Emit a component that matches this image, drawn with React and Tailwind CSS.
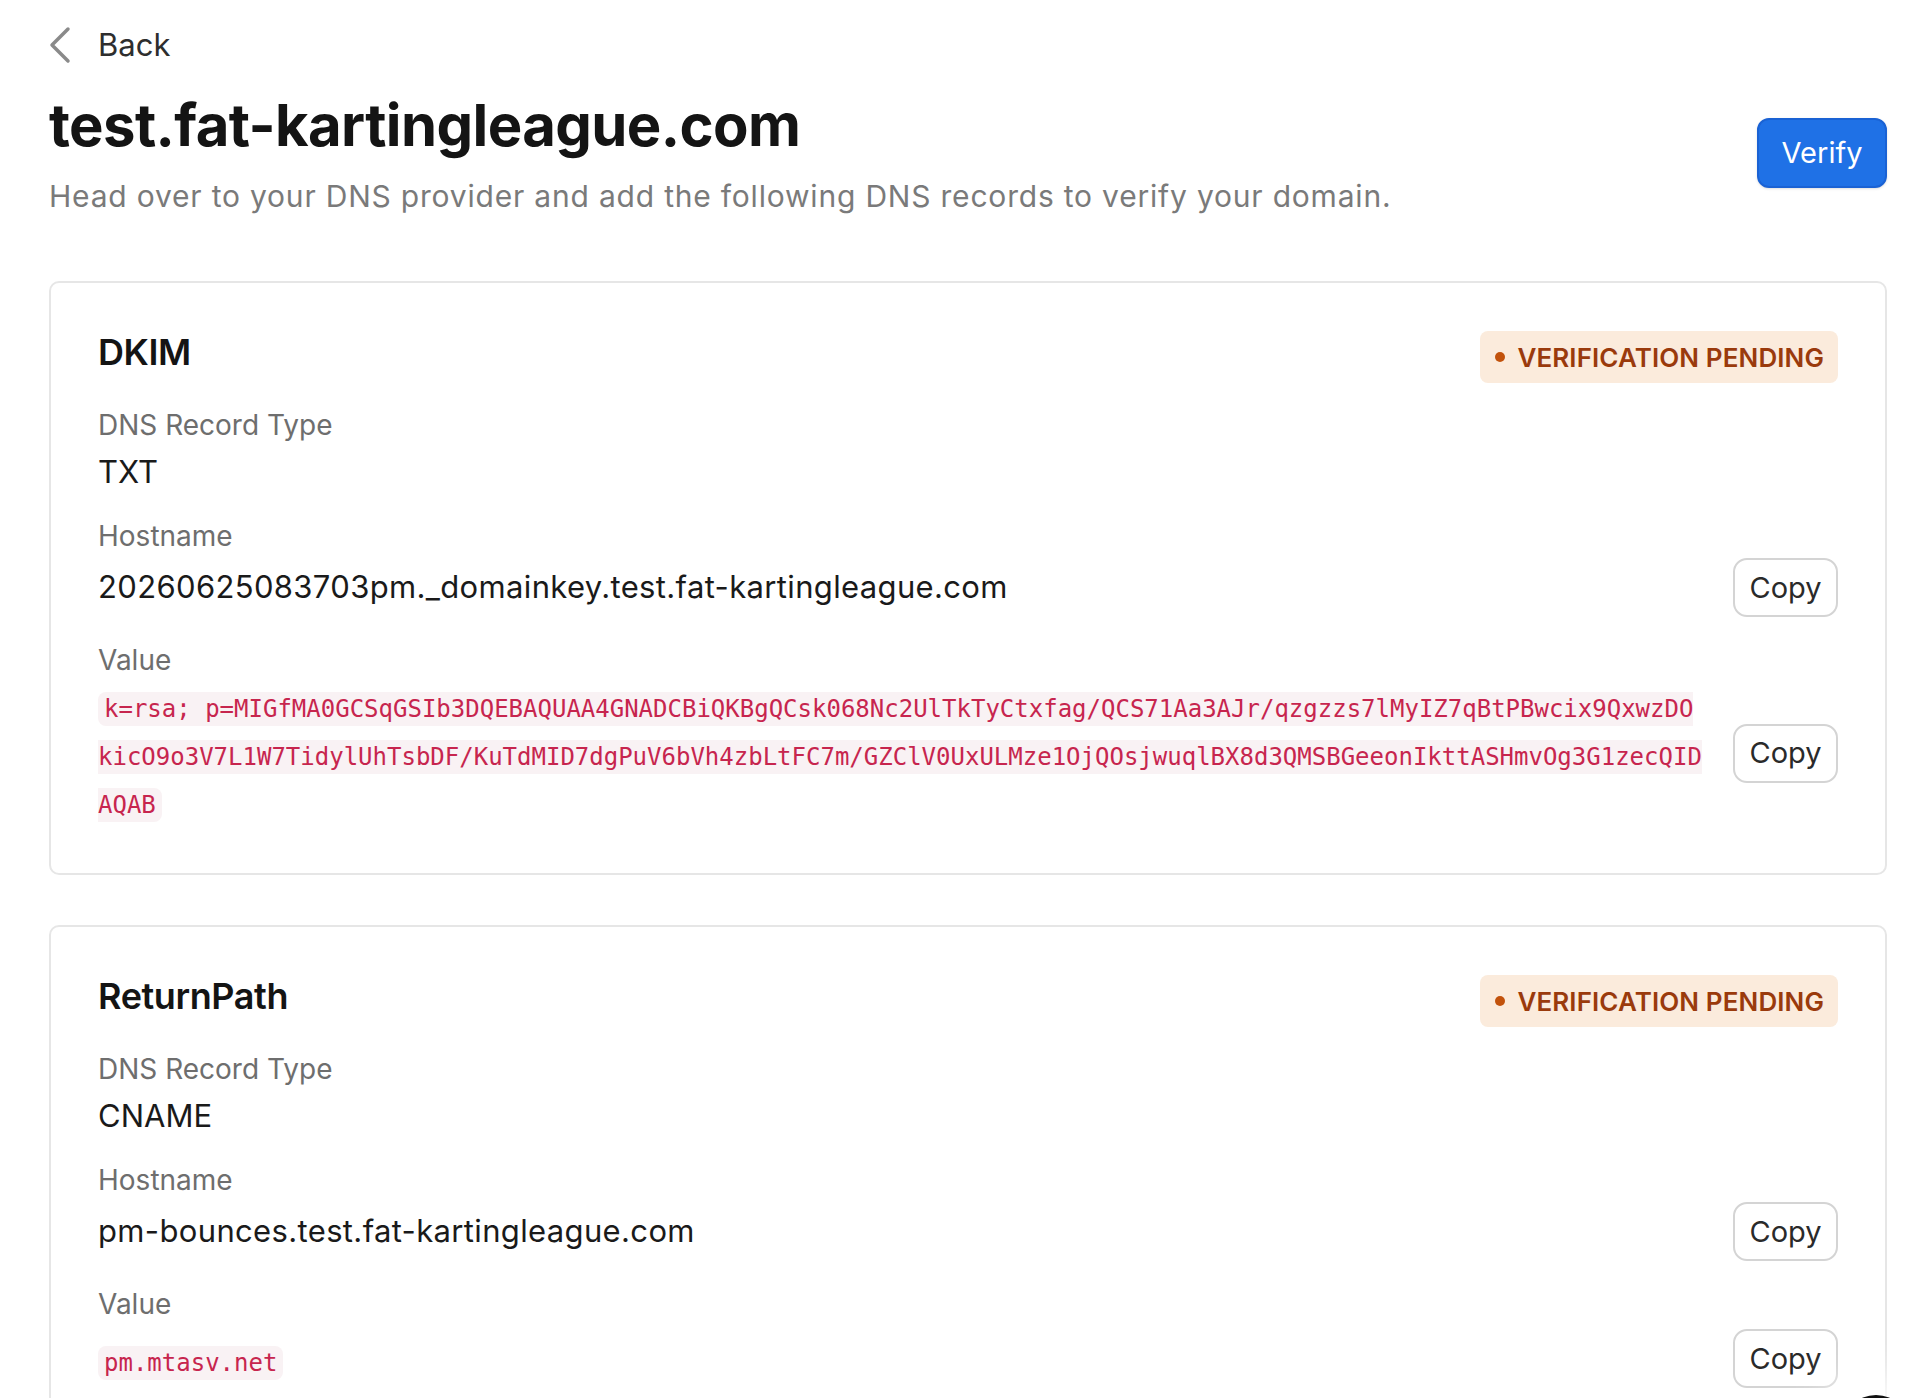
import React from 'react'

const dkimValue = [
  'k=rsa; p=MIGfMA0GCSqGSIb3DQEBAQUAA4GNADCBiQKBgQCsk068Nc2UlTkTyCtxfag/QCS71Aa3AJr/qzgzzs7lMyIZ7qBtPBwcix9QxwzDO',
  'kicO9o3V7L1W7TidylUhTsbDF/KuTdMID7dgPuV6bVh4zbLtFC7m/GZClV0UxULMze1OjQOsjwuqlBX8d3QMSBGeeonIkttASHmvOg3G1zecQID',
  'AQAB',
]

const records = [
  {
    name: 'DKIM',
    type: 'TXT',
    hostname: '20260625083703pm._domainkey.test.fat-kartingleague.com',
    value: dkimValue,
  },
  {
    name: 'ReturnPath',
    type: 'CNAME',
    hostname: 'pm-bounces.test.fat-kartingleague.com',
    value: ['pm.mtasv.net'],
  },
]

function CopyButton({ className = '' }) {
  return (
    <button className={`shrink-0 w-[105px] h-[59px] rounded-[14px] border-2 border-[#d4d4d4] bg-white text-[29px] text-[#2a2a2a] ${className}`}>
      Copy
    </button>
  )
}

function StatusBadge() {
  return (
    <div className="flex items-center gap-[12px] h-[52px] pl-[15px] pr-[14px] rounded-[8px] bg-[#fbebdc]">
      <span className="w-[10px] h-[10px] rounded-full bg-[#c2520c]" />
      <span className="text-[26px] font-semibold tracking-[0.1px] text-[#9a3a0c]">VERIFICATION PENDING</span>
    </div>
  )
}

function RecordCard({ record }) {
  return (
    <div className="border-2 border-[#e6e6e6] rounded-[10px] px-[47px] pt-[48px] pb-[44px]">
      <div className="flex items-center justify-between">
        <h2 className="text-[36px] font-semibold tracking-[-0.4px] text-[#141414] leading-[44px] -mt-[10px]">{record.name}</h2>
        <StatusBadge />
      </div>

      <div className="mt-[22px] text-[28px] leading-[40px] text-[#6e6e6e]">DNS Record Type</div>
      <div className="mt-[3px] text-[31px] leading-[48px] text-[#1a1a1a]">{record.type}</div>

      <div className="mt-[20px] text-[28px] leading-[40px] text-[#6e6e6e]">Hostname</div>
      <div className="mt-[2px] flex items-center gap-[30px]">
        <div className="flex-1 min-w-0 text-[31px] tracking-[0.35px] text-[#1a1a1a]">{record.hostname}</div>
        <CopyButton />
      </div>

      <div className="mt-[23px] text-[28px] leading-[40px] text-[#6e6e6e]">Value</div>
      <div className="mt-[5px] flex items-center gap-[30px]">
        <div className="flex-1 min-w-0 font-['DejaVu_Sans_Mono',monospace] text-[24px] leading-[48px] whitespace-nowrap">
          <code className="font-['DejaVu_Sans_Mono',monospace] text-[24px] leading-[48px] text-[#c7254e] bg-[#f9f2f4] px-[6px] py-[3px] rounded-[8px]">
            {record.value.map((line, i) => (
              <React.Fragment key={i}>
                {i > 0 && <br />}
                {line}
              </React.Fragment>
            ))}
          </code>
        </div>
        <CopyButton className="mb-[8px]" />
      </div>
    </div>
  )
}

export default function App() {
  return (
    <div className="relative h-screen overflow-hidden bg-white font-['Inter',sans-serif]">
      <div className="pl-[49px] pr-[37px] pt-[25px]">
        <div className="flex items-center gap-[26px] h-[40px]">
          <svg width="24" height="38" viewBox="0 0 24 38" fill="none" className="-ml-[1px]">
            <path d="M20 3 L4 19 L20 35" stroke="#8a8a8a" strokeWidth="3.5" strokeLinecap="round" strokeLinejoin="round" />
          </svg>
          <span className="text-[31px] text-[#2e2e2e]">Back</span>
        </div>

        <div className="mt-[24px] flex items-center justify-between">
          <div>
            <h1 className="text-[58px] font-bold leading-[72px] tracking-[-0.6px] text-[#141414]">
              test.fat-kartingleague.com
            </h1>
            <p className="mt-[15px] text-[30px] leading-[40px] tracking-[0.8px] text-[#7a7a7a]">
              Head over to your DNS provider and add the following DNS records to verify your domain.
            </p>
          </div>
          <button className="h-[70px] w-[130px] rounded-[12px] bg-[#1f71e6] border-2 border-[#1a62d4] text-white text-[29px] shadow-sm">
            Verify
          </button>
        </div>

        <div className="mt-[65px] flex flex-col gap-[50px]">
          {records.map((r) => (
            <RecordCard key={r.name} record={r} />
          ))}
        </div>
      </div>

      <div className="absolute right-[14px] top-[1395px] w-[68px] h-[68px] rounded-full bg-[#111] shadow-[0_0_40px_20px_rgba(255,255,255,0.9)]" />
    </div>
  )
}
